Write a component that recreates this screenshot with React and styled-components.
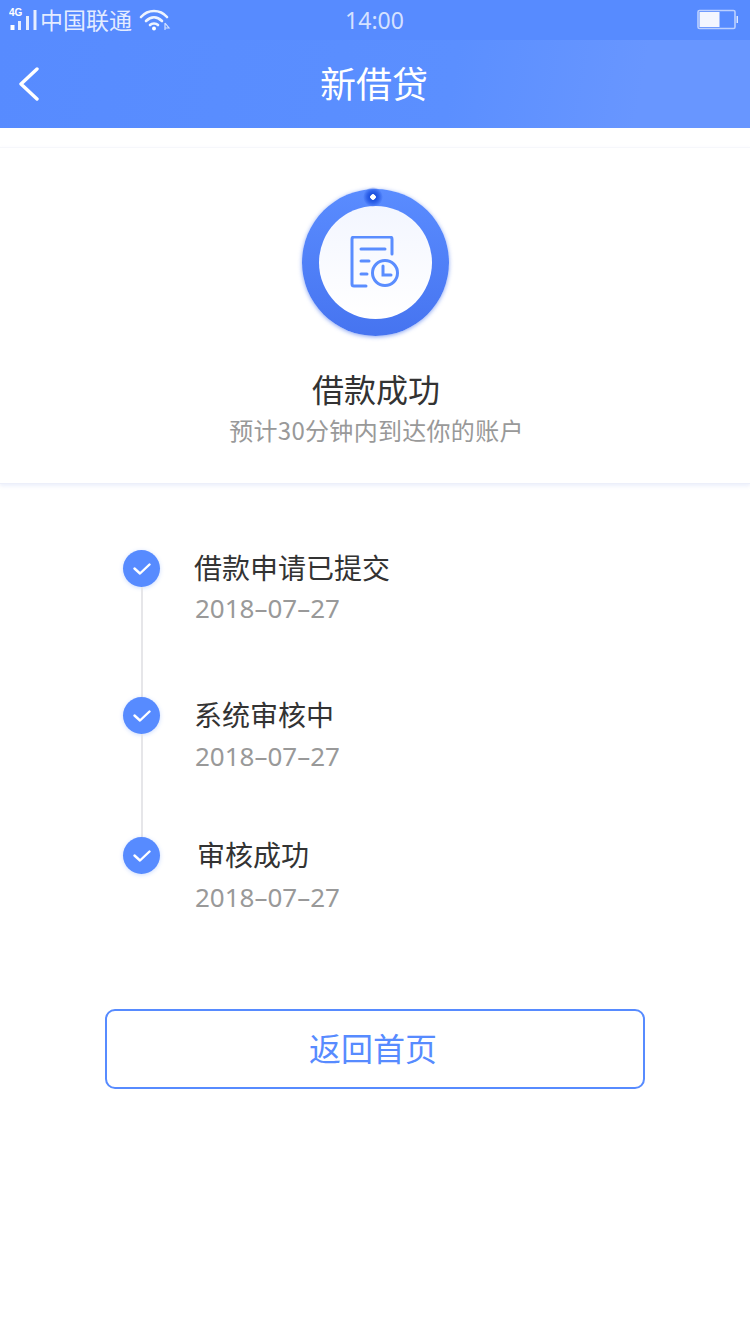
import React from "react";
import styled, { createGlobalStyle } from "styled-components";

const Global = createGlobalStyle`
  html, body {
    margin: 0;
    padding: 0;
    background: #fff;
  }
  * { box-sizing: border-box; }
`;

const Page = styled.div`
  width: 750px;
  height: 1334px;
  overflow: hidden;
  background: #fff;
  font-family: "Noto Sans CJK SC", "Noto Sans", sans-serif;
`;

const Header = styled.header`
  height: 128px;
  background: #578bff;
`;

const StatusBar = styled.div`
  height: 40px;
  padding: 0 12px 0 9px;
  display: grid;
  grid-template-columns: 1fr auto 1fr;
  align-items: center;
  color: rgba(255, 255, 255, 0.85);
`;

const Carrier = styled.div`
  display: flex;
  align-items: center;
  font-size: 23px;
  line-height: 38px;
  height: 40px;
`;

const CarrierName = styled.span`
  margin-left: -1px;
  margin-top: -2px;
`;

const Time = styled.div`
  font-family: "Noto Sans", sans-serif;
  font-size: 23px;
  line-height: 40px;
  margin-left: 2px;
  color: rgba(255, 255, 255, 0.75);
`;

const Battery = styled.div`
  justify-self: end;
  display: flex;
  align-items: center;
  line-height: 0;
`;

const NavBar = styled.div`
  height: 88px;
  display: flex;
  align-items: center;
  justify-content: center;
  position: relative;
  background: linear-gradient(100deg, #578bff 0%, #5b8fff 60%, #6896ff 85%, #6896ff 100%);
`;

const BackIcon = styled.svg`
  position: absolute;
  left: 18px;
  top: 27px;
`;

const NavTitle = styled.h1`
  margin: -4px 2px 0 0;
  font-size: 36px;
  font-weight: 400;
  line-height: 88px;
  color: #fff;
`;

const Summary = styled.section`
  margin-top: 19px;
  height: 337px;
  border-top: 1px solid #f6f7fb;
  border-bottom: 1px solid #eceffa;
  box-shadow: 0 2px 4px rgba(87, 120, 220, 0.12);
  padding-top: 41px;
  display: flex;
  flex-direction: column;
  align-items: center;
`;

const Ring = styled.div`
  width: 147px;
  height: 147px;
  border-radius: 50%;
  position: relative;
  display: flex;
  align-items: center;
  justify-content: center;
  background: linear-gradient(180deg, #5a8cff 0%, #4674f0 100%);
  box-shadow: 0 1px 4px rgba(60, 105, 235, 0.6);
`;

const RingCenter = styled.div`
  width: 113px;
  height: 113px;
  margin-top: -1px;
  border-radius: 50%;
  background: linear-gradient(180deg, #f3f6ff 0%, #fff 100%);
  display: flex;
  align-items: center;
  justify-content: center;
`;

const RingDot = styled.span`
  position: absolute;
  top: -2px;
  left: 61px;
  width: 20px;
  height: 20px;
  border-radius: 50%;
  background: radial-gradient(circle, #fff 0 2.5px, #1b4fdc 3px, #2f62ea 6px, rgba(70, 116, 240, 0) 10px);
`;

const SummaryTitle = styled.h2`
  margin: 29px 0 0 2px;
  font-size: 32px;
  font-weight: 400;
  line-height: 46px;
  color: #333;
`;

const SummaryNote = styled.p`
  margin: 1px 0 0 3px;
  font-size: 24px;
  line-height: 36px;
  letter-spacing: 0.3px;
  color: #999;
`;

const Timeline = styled.ul`
  list-style: none;
  margin: 66px 0 36px;
  padding: 0 0 0 123px;
`;

const Step = styled.li`
  height: ${(p) => p.$height}px;
  display: flex;
`;

const Marker = styled.div`
  width: 37px;
  display: flex;
  flex-direction: column;
  align-items: center;
`;

const Dot = styled.span`
  width: 37px;
  height: 37px;
  flex: none;
  border-radius: 50%;
  background: #578bff;
  box-shadow: 0 1px 4px rgba(87, 139, 255, 0.3);
  display: flex;
  align-items: center;
  justify-content: center;
`;

const Line = styled.span`
  width: 2px;
  flex: 1;
  background: #e6e6e9;
`;

const StepText = styled.div`
  margin-left: ${(p) => p.$indent}px;
  margin-top: -3px;
`;

const StepTitle = styled.div`
  font-size: 28px;
  line-height: 40px;
  margin-left: -2px;
  color: #333;
`;

const StepDate = styled.div`
  margin-top: ${(p) => p.$gap}px;
  margin-left: ${(p) => p.$back}px;
  font-family: "Noto Sans", sans-serif;
  font-size: 26px;
  line-height: 36px;
  color: #999;
`;

const HomeButton = styled.button`
  display: block;
  width: 540px;
  height: 80px;
  margin: 0 0 0 105px;
  padding: 0 4px 4px 0;
  border: 2px solid #578bff;
  border-radius: 10px;
  background: #fff;
  color: #578bff;
  font-family: inherit;
  font-size: 32px;
  line-height: 72px;
`;

const Check = () => (
  <svg width="18" height="14" viewBox="0 0 18 14" fill="none">
    <path d="M1.5 6.5 L7 11.5 L16.5 2.5" stroke="#fff" strokeWidth="2.4" strokeLinecap="round" strokeLinejoin="round" />
  </svg>
);

const steps = [
  { title: "借款申请已提交", height: 147, indent: 36, back: -1, gap: 3, line: true },
  { title: "系统审核中", height: 140, indent: 36, back: -1, gap: 4, line: true },
  { title: "审核成功", height: 136, indent: 39, back: -4, gap: 5, line: false },
];

export default function App() {
  return (
    <Page>
      <Global />
      <Header>
        <StatusBar>
          <Carrier>
            <svg width="31" height="26" viewBox="0 0 31 26" style={{ marginRight: 1 }}>
              <text x="0" y="9" fontSize="10" fontWeight="700" fill="#fff" fontFamily="Liberation Sans, sans-serif">4G</text>
              <rect x="1.5" y="18" width="4" height="5" fill="#fff" />
              <rect x="9" y="14" width="3" height="9" fill="#fff" opacity=".85" />
              <rect x="17" y="9" width="3" height="14" fill="#fff" opacity=".85" />
              <rect x="24.5" y="3" width="3" height="20" fill="#fff" opacity=".85" />
            </svg>
            <CarrierName>中国联通</CarrierName>
            <svg width="32" height="24" viewBox="0 0 32 24" fill="none" style={{ marginLeft: 7 }}>
              <path d="M2 9 C9 1 21 1 28 9" stroke="#fff" strokeWidth="2.6" strokeLinecap="round" opacity=".9" />
              <path d="M7 13 C12 8 18 8 23 13" stroke="#fff" strokeWidth="2.6" strokeLinecap="round" opacity=".9" />
              <path d="M11 17 C13 15 17 15 19 17" stroke="#fff" strokeWidth="2.6" strokeLinecap="round" opacity=".9" />
              <circle cx="15" cy="20.5" r="2" fill="#fff" />
              <path d="M26 15 L26 22 M26 15 L30 20 L26 20" stroke="#fff" strokeWidth="1.2" opacity=".75" />
            </svg>
          </Carrier>
          <Time>14:00</Time>
          <Battery>
            <svg width="41" height="22" viewBox="0 0 41 22" fill="none">
              <rect x="1" y="1.5" width="37" height="18" rx="1.5" stroke="#fff" strokeOpacity=".6" strokeWidth="1.6" />
              <rect x="2.5" y="3" width="20" height="15" fill="#f3f6ff" />
              <rect x="39.5" y="7" width="1.5" height="7" fill="#fff" opacity=".8" />
            </svg>
          </Battery>
        </StatusBar>
        <NavBar>
          <BackIcon width="24" height="34" viewBox="0 0 24 34" fill="none">
            <path d="M19 2 L3 17 L19 32" stroke="#fff" strokeWidth="3.4" strokeLinecap="round" strokeLinejoin="round" />
          </BackIcon>
          <NavTitle>新借贷</NavTitle>
        </NavBar>
      </Header>

      <Summary>
        <Ring>
          <RingDot />
          <RingCenter>
            <svg width="50" height="52" viewBox="0 0 50 52" fill="none" stroke="#5a8dff" strokeWidth="3" strokeLinecap="round">
              <path d="M16 50 H4 Q2 50 2 48 V3 Q2 1 4 1 H40 Q42 1 42 3 V18" />
              <path d="M11 13 H35" />
              <path d="M11 25 H19" />
              <path d="M11 38 H17" />
              <circle cx="35" cy="37" r="12.5" strokeWidth="3" />
              <path d="M33 30 V39 H41" />
            </svg>
          </RingCenter>
        </Ring>
        <SummaryTitle>借款成功</SummaryTitle>
        <SummaryNote>预计30分钟内到达你的账户</SummaryNote>
      </Summary>

      <Timeline>
        {steps.map((s) => (
          <Step key={s.title} $height={s.height}>
            <Marker>
              <Dot>
                <Check />
              </Dot>
              {s.line && <Line />}
            </Marker>
            <StepText $indent={s.indent}>
              <StepTitle>{s.title}</StepTitle>
              <StepDate $back={s.back} $gap={s.gap}>2018–07–27</StepDate>
            </StepText>
          </Step>
        ))}
      </Timeline>

      <HomeButton type="button">返回首页</HomeButton>
    </Page>
  );
}
